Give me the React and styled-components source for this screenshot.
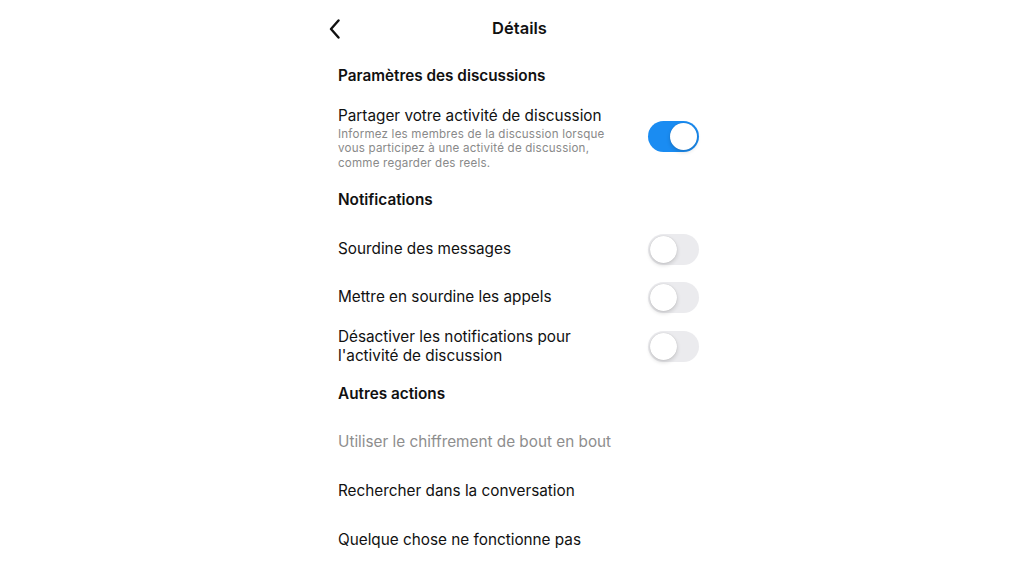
import React, { useState } from 'react'
import styled, { createGlobalStyle } from 'styled-components'

const GlobalStyle = createGlobalStyle`
  body {
    margin: 0;
    background: #fff;
    font-family: Inter, "Liberation Sans", sans-serif;
    color: #111;
    -webkit-font-smoothing: antialiased;
  }
`

const Page = styled.div`
  width: 1024px;
  height: 576px;
  overflow: hidden;
  background: #fff;
`

const Column = styled.div`
  width: 361px;
  margin-left: 338px;
`

const Header = styled.header`
  position: relative;
  height: 56px;
  display: flex;
  align-items: center;
  justify-content: center;
`

const BackButton = styled.button`
  position: absolute;
  left: -10px;
  top: 18px;
  width: 14px;
  height: 22px;
  padding: 0;
  border: none;
  background: none;
  display: flex;
  align-items: center;
  justify-content: center;
  cursor: pointer;
`

const Title = styled.h1`
  margin: 0 0 0 2px;
  font-size: 16.5px;
  font-weight: 600;
`

const SectionTitle = styled.h2`
  margin: ${p => p.$mt || 0}px 0 0;
  height: 38px;
  display: flex;
  align-items: center;
  font-size: 15.3px;
  font-weight: 600;
`

const List = styled.div`
  padding-top: ${p => p.$offset ?? 6}px;
`

const Row = styled.div`
  display: flex;
  align-items: ${p => p.$align || 'center'};
  justify-content: space-between;
  min-height: ${p => p.$height || 48}px;
  padding: ${p => p.$pad || '0'};
`

const TextBlock = styled.div`
  display: flex;
  flex-direction: column;
  max-width: ${p => p.$width || 280}px;
`

const Label = styled.span`
  font-size: 15.3px;
  line-height: 19.5px;
  color: ${p => (p.$muted ? '#8e8e8e' : '#111')};
`

const Description = styled.span`
  margin-top: 1px;
  font-size: 11.6px;
  line-height: 14.5px;
  color: #8a8a8a;
  letter-spacing: 0.2px;
`

const Track = styled.button`
  flex: none;
  position: relative;
  width: 51px;
  height: 31px;
  margin-top: ${p => p.$mt || 0}px;
  padding: 0;
  border: none;
  border-radius: 16px;
  background: ${p => (p.$on ? '#1a8cf2' : '#ebebee')};
  cursor: pointer;
`

const Knob = styled.span`
  position: absolute;
  top: 2px;
  left: ${p => (p.$on ? '22px' : '2px')};
  width: 27px;
  height: 27px;
  border-radius: 50%;
  background: #fff;
  box-shadow: 0 2px 4px rgba(0, 0, 0, 0.16), 0 0 1px rgba(0, 0, 0, 0.2);
`

const Toggle = ({ initial, mt }) => {
  const [on, setOn] = useState(initial)
  return (
    <Track $on={on} $mt={mt} onClick={() => setOn(!on)}>
      <Knob $on={on} />
    </Track>
  )
}

const ChevronLeft = () => (
  <svg width='12' height='20' viewBox='0 0 12 20' fill='none'>
    <path d='M9.5 1.5 L2 10 L9.5 18.5' stroke='#111' strokeWidth='2.4' strokeLinecap='round' strokeLinejoin='round' />
  </svg>
)

const App = () => {
  return (
    <Page>
      <GlobalStyle />
      <Column>
        <Header>
          <BackButton aria-label='Retour'><ChevronLeft /></BackButton>
          <Title>Détails</Title>
        </Header>

        <SectionTitle>Paramètres des discussions</SectionTitle>
        <List>
          <Row $align='flex-start' $pad='6px 0 10px'>
            <TextBlock $width={276}>
              <Label>Partager votre activité de discussion</Label>
              <Description>
                Informez les membres de la discussion lorsque vous participez à une activité de discussion, comme regarder des reels.
              </Description>
            </TextBlock>
            <Toggle initial mt={15} />
          </Row>
        </List>

        <SectionTitle>Notifications</SectionTitle>
        <List $offset={7}>
          <Row>
            <Label>Sourdine des messages</Label>
            <Toggle initial={false} />
          </Row>
          <Row>
            <Label>Mettre en sourdine les appels</Label>
            <Toggle initial={false} />
          </Row>
          <Row $height={50}>
            <TextBlock>
              <Label>Désactiver les notifications pour l'activité de discussion</Label>
            </TextBlock>
            <Toggle initial={false} />
          </Row>
        </List>

        <SectionTitle $mt={3}>Autres actions</SectionTitle>
        <List $offset={5}>
          <Row $height={49}><Label $muted>Utiliser le chiffrement de bout en bout</Label></Row>
          <Row $height={49}><Label>Rechercher dans la conversation</Label></Row>
          <Row $height={49}><Label>Quelque chose ne fonctionne pas</Label></Row>
        </List>
      </Column>
    </Page>
  )
}

export default App
